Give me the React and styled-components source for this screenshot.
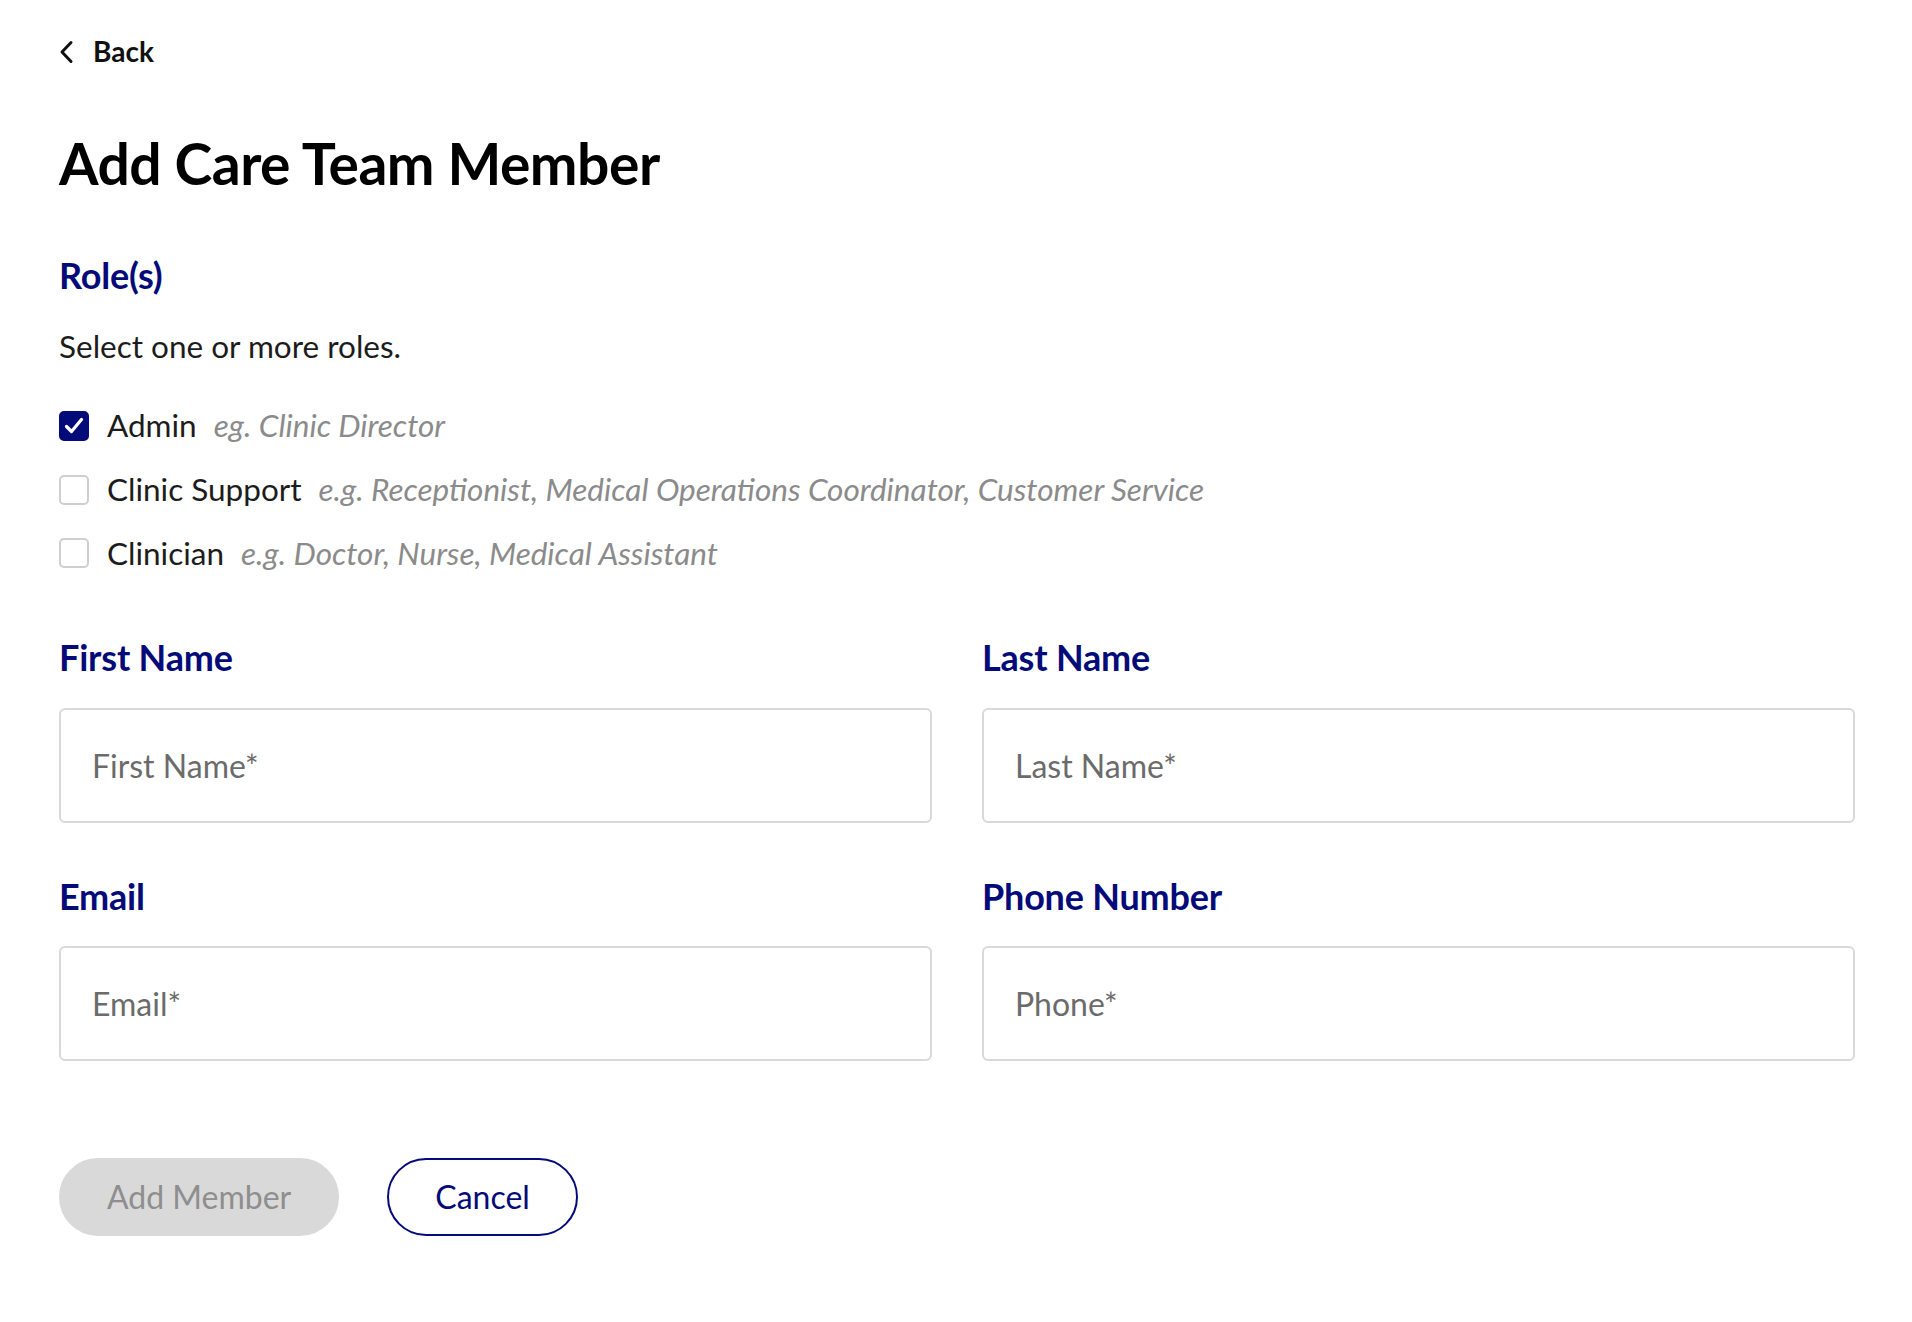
import React, { useState } from "react";
import styled, { createGlobalStyle } from "styled-components";

const NAVY = "#040b78";

const Global = createGlobalStyle`
  html, body { margin: 0; padding: 0; background: #ffffff; }
  body { font-family: Lato, "Noto Sans", "Liberation Sans", sans-serif; color: #1c1c1c; }
  * { box-sizing: border-box; }
`;

const Page = styled.main`
  width: 1912px;
  padding: 35px 57px 80px 59px;
  display: flex;
  flex-direction: column;
`;

const BackLink = styled.a`
  display: inline-flex;
  align-items: center;
  align-self: flex-start;
  gap: 18px;
  font-size: 28px;
  line-height: 1.2;
  font-weight: 700;
  color: #111;
  text-decoration: none;
  cursor: pointer;
  svg { display: block; }
`;

const Title = styled.h1`
  margin: 60px 0 0;
  font-size: 57px;
  line-height: 1.2;
  font-weight: 700;
  color: #000;
  letter-spacing: -0.5px;
`;

const SectionLabel = styled.h2`
  margin: ${(p) => p.$top}px 0 0;
  font-size: 36px;
  line-height: 1.2;
  font-weight: 700;
  color: ${NAVY};
  letter-spacing: -0.2px;
`;

const Hint = styled.p`
  margin: 31px 0 0;
  font-size: 31.5px;
  line-height: 1.2;
  color: #1c1c1c;
`;

const RoleList = styled.div`
  margin-top: 41px;
  display: flex;
  flex-direction: column;
  gap: 26px;
`;

const RoleRow = styled.label`
  display: flex;
  align-items: center;
  gap: 17px;
  font-size: 31.5px;
  line-height: 1.2;
  cursor: pointer;
`;

const Box = styled.span`
  width: 30px;
  height: 30px;
  flex: none;
  border-radius: 5px;
  border: 2px solid ${(p) => (p.$checked ? NAVY : "#cfcfd3")};
  background: ${(p) => (p.$checked ? NAVY : "#fff")};
  display: flex;
  align-items: center;
  justify-content: center;
  margin-right: 1px;
`;

const RoleName = styled.span`
  color: #1c1c1c;
`;

const Example = styled.span`
  font-style: italic;
  color: #8b8b8b;
`;

const Grid = styled.div`
  display: grid;
  grid-template-columns: 1fr 1fr;
  column-gap: 50px;
`;

const Field = styled.div`
  display: flex;
  flex-direction: column;
`;

const Input = styled.input`
  margin-top: 28px;
  height: 115px;
  width: 100%;
  border: 2px solid #d9d9d9;
  border-radius: 6px;
  padding: 0 31px;
  font-family: inherit;
  font-size: 32px;
  color: #1c1c1c;
  outline: none;
  &::placeholder { color: #6b6b6b; }
`;

const Actions = styled.div`
  margin-top: 97px;
  display: flex;
  gap: 48px;
`;

const Button = styled.button`
  height: 78px;
  padding: 0 46px;
  border-radius: 39px;
  font-family: inherit;
  font-size: 32px;
  line-height: 1;
  border: 2px solid ${(p) => (p.$variant === "outline" ? NAVY : "#d9d9d9")};
  background: ${(p) => (p.$variant === "outline" ? "#fff" : "#d9d9d9")};
  color: ${(p) => (p.$variant === "outline" ? NAVY : "#8e8e8e")};
  cursor: ${(p) => (p.disabled ? "default" : "pointer")};
`;

const roles = [
  { name: "Admin", example: "eg. Clinic Director" },
  { name: "Clinic Support", example: "e.g. Receptionist, Medical Operations Coordinator, Customer Service" },
  { name: "Clinician", example: "e.g. Doctor, Nurse, Medical Assistant" },
];

function Check() {
  return (
    <svg width="22" height="20" viewBox="0 0 22 20" fill="none">
      <path d="M3.5 10.5l5 5L18.5 3.5" stroke="#fff" strokeWidth="3.2" strokeLinecap="round" strokeLinejoin="round" />
    </svg>
  );
}

export default function App() {
  const [checked, setChecked] = useState({ Admin: true });
  return (
    <>
      <Global />
      <Page>
        <BackLink>
          <svg width="16" height="24" viewBox="0 0 16 24" fill="none">
            <path d="M12 2.5L3 12l9 9.5" stroke="#111" strokeWidth="3" strokeLinecap="round" strokeLinejoin="round" />
          </svg>
          Back
        </BackLink>
        <Title>Add Care Team Member</Title>
        <SectionLabel $top={57}>Role(s)</SectionLabel>
        <Hint>Select one or more roles.</Hint>
        <RoleList>
          {roles.map((r) => (
            <RoleRow key={r.name} onClick={() => setChecked((c) => ({ ...c, [r.name]: !c[r.name] }))}>
              <Box $checked={!!checked[r.name]}>{checked[r.name] && <Check />}</Box>
              <RoleName>{r.name}</RoleName>
              <Example>{r.example}</Example>
            </RoleRow>
          ))}
        </RoleList>
        <Grid>
          <Field>
            <SectionLabel $top={64}>First Name</SectionLabel>
            <Input placeholder="First Name*" />
          </Field>
          <Field>
            <SectionLabel $top={64}>Last Name</SectionLabel>
            <Input placeholder="Last Name*" />
          </Field>
          <Field>
            <SectionLabel $top={52}>Email</SectionLabel>
            <Input placeholder="Email*" />
          </Field>
          <Field>
            <SectionLabel $top={52}>Phone Number</SectionLabel>
            <Input placeholder="Phone*" />
          </Field>
        </Grid>
        <Actions>
          <Button disabled>Add Member</Button>
          <Button $variant="outline">Cancel</Button>
        </Actions>
      </Page>
    </>
  );
}
